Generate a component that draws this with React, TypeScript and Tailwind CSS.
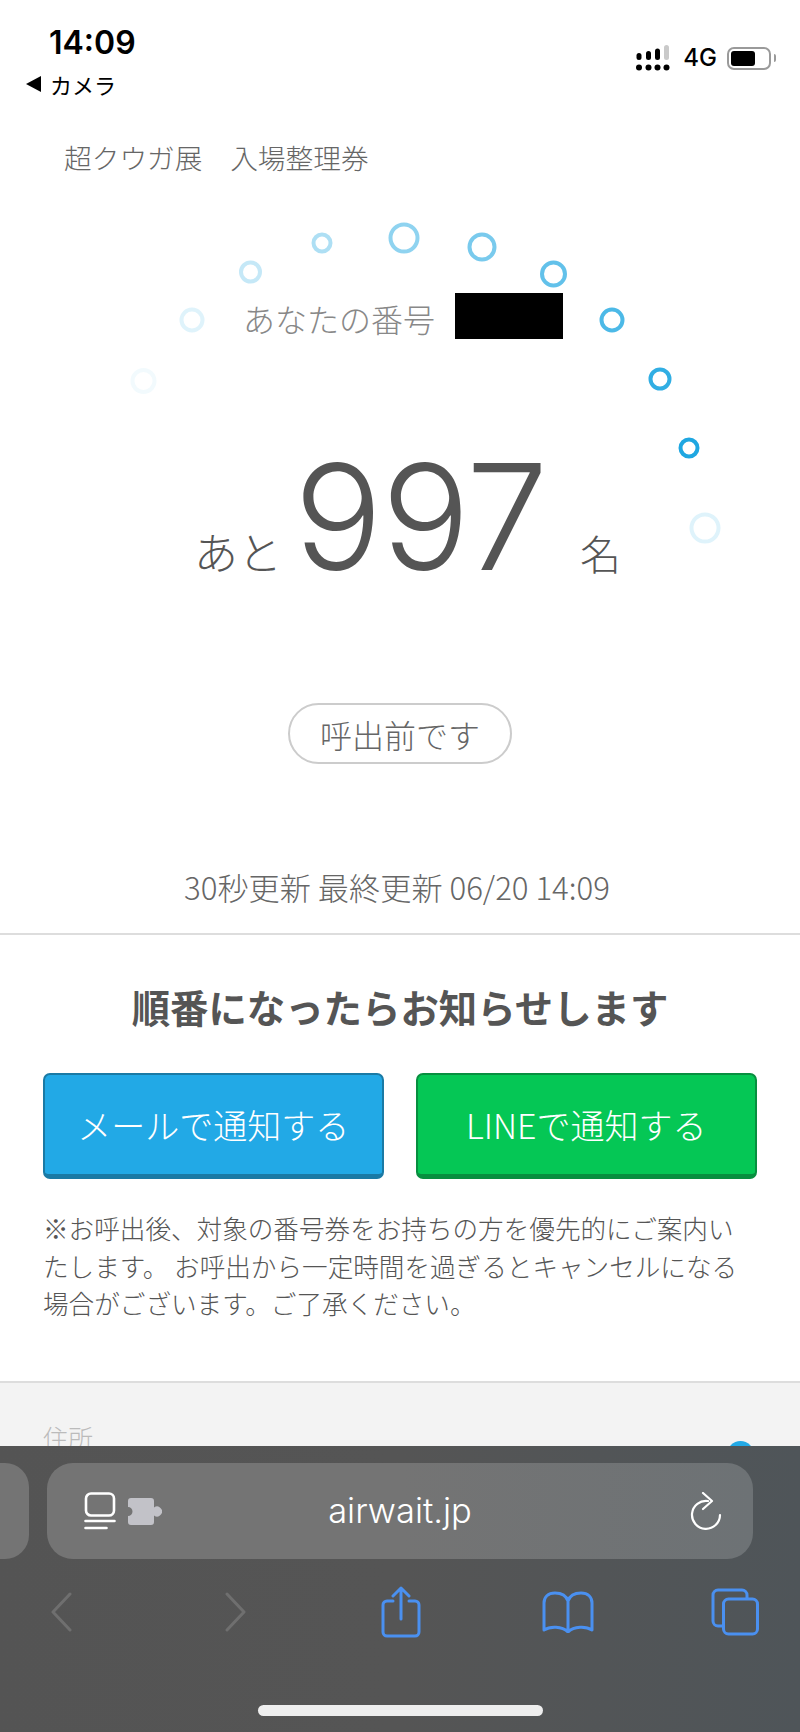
const JP = "font-['Noto_Sans_CJK_JP','Noto_Sans',sans-serif]";

const RINGS = [
  { cx: 143.5, cy: 381, r: 11, w: 4, o: 0.06 },
  { cx: 192, cy: 320, r: 10.5, w: 4, o: 0.14 },
  { cx: 250.5, cy: 272, r: 9.5, w: 4, o: 0.26 },
  { cx: 322, cy: 243, r: 8.5, w: 4, o: 0.36 },
  { cx: 404, cy: 238, r: 13.5, w: 4, o: 0.5 },
  { cx: 482, cy: 247, r: 12.5, w: 4, o: 0.6 },
  { cx: 553.5, cy: 274, r: 11.5, w: 4, o: 0.7 },
  { cx: 612, cy: 320, r: 10.5, w: 4, o: 0.8 },
  { cx: 660, cy: 379, r: 9.5, w: 4, o: 0.92 },
  { cx: 689, cy: 448, r: 8.5, w: 4, o: 1 },
  { cx: 705, cy: 528, r: 13.5, w: 4, o: 0.14 },
];

function Rings() {
  return (
    <svg className="absolute left-0 top-0 pointer-events-none" width="800" height="600" viewBox="0 0 800 600" fill="none">
      {RINGS.map((ring) => (
        <circle
          key={ring.cx}
          cx={ring.cx}
          cy={ring.cy}
          r={ring.r}
          stroke="#1fa7e1"
          strokeWidth={ring.w}
          opacity={ring.o}
        />
      ))}
    </svg>
  );
}

function SignalIcon() {
  const cols = [
    { x: 0.5, top: 8, color: '#000' },
    { x: 10, top: 6, color: '#000' },
    { x: 19, top: 3.5, color: '#000' },
    { x: 28, top: 0, color: '#c9c9c9' },
  ];
  return (
    <svg width="34" height="26" viewBox="0 0 34 26">
      {cols.map((col) => (
        <g key={col.x}>
          <rect x={col.x} y={col.top} width="5" height={15 - col.top} rx="2.5" fill={col.color} />
          <circle cx={col.x + 2.5} cy="22.5" r="3" fill="#000" />
        </g>
      ))}
    </svg>
  );
}

function BatteryIcon() {
  return (
    <div className="flex items-center">
      <div className="flex h-[23px] w-[44px] items-center rounded-[7px] border-2 border-[#9a9a9a] pl-[2px]">
        <div className="h-[15px] w-[24px] rounded-[3px] bg-black" />
      </div>
      <div className="ml-[3px] h-[8px] w-[2px] rounded-r-sm bg-[#9a9a9a]" />
    </div>
  );
}

function ReaderIcon() {
  return (
    <svg width="32" height="38" viewBox="0 0 32 38" fill="none" stroke="#fff" strokeWidth="2.6" strokeLinecap="round">
      <rect x="2" y="1.5" width="28" height="22" rx="5" />
      <path d="M1.5 29h29M1.5 36h21" />
    </svg>
  );
}

function PuzzleIcon() {
  return (
    <svg width="34" height="27" viewBox="0 0 34 27" fill="#c2c2c8">
      <path d="M3 0h20a3 3 0 0 1 3 3v6.5a5 5 0 1 1 0 8V24a3 3 0 0 1-3 3H3a3 3 0 0 1-3-3v-6a4.5 4.5 0 0 0 0-9V3a3 3 0 0 1 3-3z" />
    </svg>
  );
}

function ReloadIcon() {
  return (
    <svg width="32" height="38" viewBox="0 0 32 38" fill="none" stroke="#fff" strokeWidth="2.2" strokeLinecap="round" strokeLinejoin="round">
      <path d="M18 9A14 14 0 1 0 30 23" />
      <path d="M13 1l9 8-9 8" />
    </svg>
  );
}

function ChevronIcon({ flip }: { flip?: boolean }) {
  return (
    <svg width="21" height="40" viewBox="0 0 21 40" fill="none" stroke="#6f6f6f" strokeWidth="3" strokeLinecap="round" strokeLinejoin="round">
      <path d={flip ? 'M2 2l17 18L2 38' : 'M19 2L2 20l17 18'} />
    </svg>
  );
}

function ShareIcon() {
  return (
    <svg width="40" height="52" viewBox="0 0 40 52" fill="none" stroke="#4a90f0" strokeWidth="3" strokeLinecap="round" strokeLinejoin="round">
      <path d="M12 15H6a4 4 0 0 0-4 4v27a4 4 0 0 0 4 4h28a4 4 0 0 0 4-4V19a4 4 0 0 0-4-4h-6" />
      <path d="M20 33V2M12 10l8-8 8 8" />
    </svg>
  );
}

function BookIcon() {
  return (
    <svg width="52" height="42" viewBox="0 0 52 42" fill="none" stroke="#4a90f0" strokeWidth="3" strokeLinecap="round" strokeLinejoin="round">
      <path d="M26 10C24 4 19 2 13 2 6 2 2 6 2 12v27c6-4 18-4 24 2 6-6 18-6 24-2V12c0-6-4-10-11-10-6 0-11 2-13 8v31" />
    </svg>
  );
}

function TabsIcon() {
  return (
    <svg width="48" height="48" viewBox="0 0 48 48" fill="none" stroke="#4a90f0" strokeWidth="3" strokeLinejoin="round">
      <path d="M36 11V7a5 5 0 0 0-5-5H7a5 5 0 0 0-5 5v26a5 5 0 0 0 5 5h5" />
      <rect x="12.5" y="11" width="34" height="35" rx="5" />
    </svg>
  );
}

function Toolbar() {
  return (
    <div className="absolute bottom-0 left-0 h-[286px] w-full bg-gradient-to-r from-[#545454] via-[#555555] to-[#4f5559]">
      <div className="mt-[17px] flex h-[96px] gap-[18px]">
        <div className="w-[29px] rounded-r-[24px] bg-[#747474]" />
        <div className="grid w-[706px] grid-cols-[1fr_auto_1fr] items-center rounded-[26px] bg-gradient-to-r from-[#747474] via-[#747474] to-[#6d7275] px-[31px]">
          <div className="ml-[6px] flex items-center gap-[12px]">
            <ReaderIcon />
            <PuzzleIcon />
          </div>
          <span className="font-['Inter','Noto_Sans',sans-serif] text-[34.5px] font-light leading-none text-white">
            airwait.jp
          </span>
          <div className="flex justify-end">
            <ReloadIcon />
          </div>
        </div>
      </div>
      <div className="mt-[27px] flex h-[52px] items-center pl-[51px]">
        <ChevronIcon />
        <div className="ml-[153px]">
          <ChevronIcon flip />
        </div>
        <div className="ml-[135px]">
          <ShareIcon />
        </div>
        <div className="ml-[121px]">
          <BookIcon />
        </div>
        <div className="ml-[117px]">
          <TabsIcon />
        </div>
      </div>
      <div className="mx-auto mt-[67px] h-[11px] w-[285px] rounded-full bg-[#eeeeee]" />
    </div>
  );
}

export default function App() {
  return (
    <div className={`relative h-[1732px] w-[800px] overflow-hidden bg-white ${JP}`}>
      <Rings />

      <header className="flex h-[110px] items-start justify-between">
        <div className="pl-[26px]">
          <div className="pl-[23px] pt-[24px] font-['Inter',sans-serif] text-[32px] font-semibold leading-[38px] text-black">
            14:09
          </div>
          <div className="mt-[9px] flex items-center gap-[9px] text-[22px] leading-[26px] text-black">
            <span className="h-0 w-0 border-y-[8px] border-r-[15px] border-y-transparent border-r-black" />
            カメラ
          </div>
        </div>
        <div className="mr-[24px] mt-[45px] flex items-center">
          <SignalIcon />
          <span className="ml-[13px] font-['Inter',sans-serif] text-[24px] font-medium leading-none text-black">4G</span>
          <div className="ml-[10px]">
            <BatteryIcon />
          </div>
        </div>
      </header>

      <div className="flex h-[96px] items-center pl-[64px] text-[27.7px] font-light text-[#666666]">
        超クウガ展　入場整理券
      </div>

      <div className="mt-[87px] flex h-[46px] items-center pl-[243px]">
        <span className="w-[195px] pt-[3px] text-[32px] font-light leading-none text-[#888888]">あなたの番号</span>
        <div className="ml-[17px] h-[46px] w-[108px] bg-black" />
      </div>

      <div className="mt-[104px] flex items-baseline pl-[194px] text-[#555555]">
        <span className="text-[44px] font-light leading-none">あと</span>
        <span className="ml-[12px] w-[286px] font-['Inter',sans-serif] text-[147px] font-light leading-[147px] tracking-[-1px]">
          997
        </span>
        <span className="text-[41px] font-light leading-none">名</span>
      </div>

      <div className="mt-[113px] flex justify-center">
        <div className="flex h-[61px] w-[224px] items-center justify-center rounded-full border-2 border-[#cccccc] text-[32px] font-light leading-none text-[#666666]">
          呼出前です
        </div>
      </div>

      <div className="mt-[103px] pr-[6px] text-center text-[31.2px] font-light leading-[40px] text-[#666666]">
        30秒更新 最終更新 06/20 14:09
      </div>

      <section className="mt-[26px] h-[448px] border-t-2 border-[#dddddd] px-[43px]">
        <h2 className="mt-[47px] text-center text-[38.4px] font-bold leading-[48px] text-[#555555]">
          順番になったらお知らせします
        </h2>
        <div className="mt-[43px] flex gap-[32px]">
          <button className="h-[106px] w-[341px] rounded-[7px] border-2 border-b-[5px] border-[#1a7aa5] bg-[#22a9e6] text-[34px] font-light text-white">
            メールで通知する
          </button>
          <button className="h-[106px] w-[342px] rounded-[7px] border-2 border-b-[5px] border-[#078f3f] bg-[#05c755] text-[34px] font-light text-white">
            LINEで通知する
          </button>
        </div>
        <p className="mt-[30px] text-[25.6px] font-light leading-[37.5px] text-[#555555]">
          <span className="block whitespace-nowrap">※お呼出後、対象の番号券をお持ちの方を優先的にご案内い</span>
          <span className="block whitespace-nowrap">たします。 お呼出から一定時間を過ぎるとキャンセルになる</span>
          <span className="block whitespace-nowrap">場合がございます。ご了承ください。</span>
        </p>
      </section>

      <section className="flex h-[400px] items-start justify-between border-t-2 border-[#dddddd] bg-[#f3f3f3] pl-[43px] pr-[46px] pt-[36px]">
        <span className="text-[25px] font-light leading-[36px] text-[#bbbbbb]">住所</span>
        <span className="mt-[22px] h-[27px] w-[27px] rounded-full bg-[#22a9e6]" />
      </section>

      <Toolbar />
    </div>
  );
}
